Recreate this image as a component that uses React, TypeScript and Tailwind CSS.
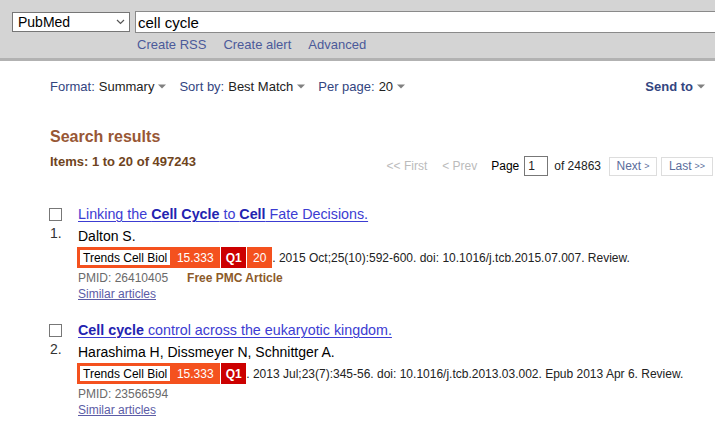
import React from "react";

const Caret = () => (
  <svg width="8" height="5" viewBox="0 0 8 5" className="ml-[4px] inline-block">
    <path d="M0 0.5h8L4 4.5z" fill="#808080" />
  </svg>
);

type Badge = { journal: string; impact: string; quartile: string; rank?: string };

type Article = {
  n: number;
  title: React.ReactNode;
  authors: string;
  badge: Badge;
  citation: string;
  pmid: string;
  freePmc?: boolean;
};

const B = ({ children }: { children: React.ReactNode }) => (
  <b className="font-bold text-[#2323b0]">{children}</b>
);

const articles: Article[] = [
  {
    n: 1,
    title: (
      <>
        Linking the <B>Cell Cycle</B> to <B>Cell</B> Fate Decisions.
      </>
    ),
    authors: "Dalton S.",
    badge: { journal: "Trends Cell Biol", impact: "15.333", quartile: "Q1", rank: "20" },
    citation: ". 2015 Oct;25(10):592-600. doi: 10.1016/j.tcb.2015.07.007. Review.",
    pmid: "26410405",
    freePmc: true,
  },
  {
    n: 2,
    title: (
      <>
        <B>Cell cycle</B> control across the eukaryotic kingdom.
      </>
    ),
    authors: "Harashima H, Dissmeyer N, Schnittger A.",
    badge: { journal: "Trends Cell Biol", impact: "15.333", quartile: "Q1" },
    citation:
      ". 2013 Jul;23(7):345-56. doi: 10.1016/j.tcb.2013.03.002. Epub 2013 Apr 6. Review.",
    pmid: "23566594",
  },
];

const JournalBadge = ({ badge }: { badge: Badge }) => (
  <span className="inline-flex h-[21px] items-stretch bg-[#f4511e] text-[12px] leading-none">
    <span className="my-[3px] ml-[3px] flex items-center bg-white px-[3px] text-black">
      {badge.journal}
    </span>
    <span className="flex w-[50px] items-center justify-center text-white">{badge.impact}</span>
    <span className="flex w-[26px] items-center justify-center border-l border-white bg-[#cc0000] font-bold text-white">
      {badge.quartile}
    </span>
    {badge.rank && (
      <span className="flex w-[26px] items-center justify-center border-l border-white text-white">
        {badge.rank}
      </span>
    )}
  </span>
);

const ArticleRow = ({ a }: { a: Article }) => (
  <div className="flex">
    <div className="w-[29px] shrink-0">
      <div className="mt-[3px] h-[13px] w-[13px] border border-[#777] bg-white" />
      <div className="mt-[4px] pl-[1px] text-[14px] leading-[16px] text-[#333]">{a.n}.</div>
    </div>
    <div>
      <a className="block text-[14.3px] leading-[18px] text-[#3c3cd2] underline decoration-1 underline-offset-2">
        {a.title}
      </a>
      <div className="mt-[4px] text-[14px] leading-[18px] text-black">{a.authors}</div>
      <div className="mt-[2px] ml-[-1px] flex items-center whitespace-nowrap">
        <JournalBadge badge={a.badge} />
        <span className="text-[12px] text-[#222]">{a.citation}</span>
      </div>
      <div className="mt-[3px] flex text-[12px] leading-[15px] text-[#6a6a6a]">
        <span>PMID: {a.pmid}</span>
        {a.freePmc && <span className="ml-[19px] font-bold text-[#8c5a2b]">Free PMC Article</span>}
      </div>
      <a className="mt-[1px] block text-[12px] leading-[15px] text-[#5c5ca6] underline decoration-1">
        Similar articles
      </a>
    </div>
  </div>
);

export default function App() {
  return (
    <div className="h-[428px] w-[715px] overflow-hidden bg-white font-['Liberation_Sans',Arial,sans-serif]">
      <div className="h-[61px] border-b-[3px] border-[#b2b2b2] bg-[#d4d4d4] pl-[12px] pt-[11px]">
        <div className="flex items-center gap-[5px]">
          <div className="flex h-[20px] w-[118px] items-center justify-between border border-[#767676] bg-white pl-[5px] pr-[4px] text-[14px] leading-none text-black">
            <span>PubMed</span>
            <svg width="9" height="6" viewBox="0 0 9 6">
              <path d="M1 1l3.5 3.5L8 1" fill="none" stroke="#555" strokeWidth="1.2" />
            </svg>
          </div>
          <div className="flex h-[22px] flex-1 items-center border border-r-0 border-[#8a8a8a] bg-white pl-[2px] text-[15px] leading-none text-black">
            cell cycle
          </div>
        </div>
        <div className="ml-[125px] mt-[4px] flex gap-[17px] text-[13px] leading-[15px] text-[#4b5a9a]">
          <a>Create RSS</a>
          <a>Create alert</a>
          <a>Advanced</a>
        </div>
      </div>

      <div className="mt-[18px] flex items-center justify-between pl-[50px] pr-[10px] text-[13px] leading-[15px]">
        <div className="flex items-center">
          <span className="text-[#33457f]">Format:</span>
          <span className="ml-[4px] text-[#222]">Summary</span>
          <Caret />
          <span className="ml-[13px] text-[#33457f]">Sort by:</span>
          <span className="ml-[4px] text-[#222]">Best Match</span>
          <Caret />
          <span className="ml-[13px] text-[#33457f]">Per page:</span>
          <span className="ml-[4px] text-[#222]">20</span>
          <Caret />
        </div>
        <div className="flex items-center font-bold text-[#33457f]">
          Send to
          <Caret />
        </div>
      </div>

      <div className="mt-[34px] pl-[50px] text-[16px] font-bold leading-[18px] text-[#985735]">
        Search results
      </div>
      <div className="mt-[8px] flex items-start justify-between pl-[50px] pr-[2px]">
        <div className="text-[13px] font-bold leading-[15px] text-[#6f4420]">Items: 1 to 20 of 497243</div>
        <div className="mt-[2px] flex items-center text-[12px] leading-none">
          <span className="text-[#bbb]">&lt;&lt; First</span>
          <span className="ml-[15px] text-[#bbb]">&lt; Prev</span>
          <span className="ml-[14px] text-black">Page</span>
          <div className="ml-[5px] flex h-[20px] w-[24px] items-center border border-[#777] pl-[3px] text-[#222]">1</div>
          <span className="ml-[6px] text-[#222]">of 24863</span>
          <div className="ml-[8px] flex h-[19px] w-[48px] items-center justify-center border border-[#ddd] text-[#5a6d9c]">
            Next <span className="ml-[3px] text-[9px]">&gt;</span>
          </div>
          <div className="ml-[4px] flex h-[19px] w-[52px] items-center justify-center border border-[#ddd] text-[#5a6d9c]">
            Last <span className="ml-[3px] text-[9px]">&gt;&gt;</span>
          </div>
        </div>
      </div>

      <div className="mt-[29px] flex flex-col gap-[19px] pl-[49px]">
        {articles.map((a) => (
          <ArticleRow key={a.n} a={a} />
        ))}
      </div>
    </div>
  );
}
